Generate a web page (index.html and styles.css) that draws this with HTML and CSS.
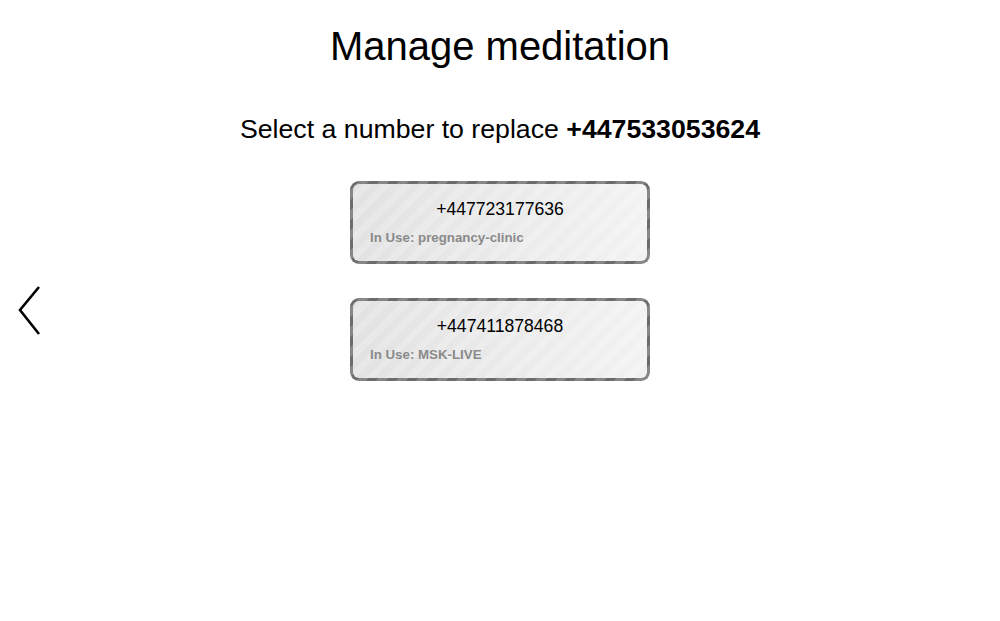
FILE: index.html
```html
<!DOCTYPE html>
<html lang="en">
<head>
<meta charset="utf-8">
<title>Manage meditation</title>
<link rel="stylesheet" href="styles.css">
</head>
<body>
<a class="back" href="#" aria-label="Back">
  <svg width="26" height="52" viewBox="0 0 26 52"><polyline points="22,2 3,25 22,49" fill="none" stroke="#000" stroke-width="2.6"/></svg>
</a>
<main class="page">
  <h1 class="title">Manage meditation</h1>
  <p class="subtitle">Select a number to replace <strong>+447533053624</strong></p>
  <ul class="numbers">
    <li class="card">
      <div class="card-number">+447723177636</div>
      <div class="card-use">In Use: pregnancy-clinic</div>
    </li>
    <li class="card">
      <div class="card-number">+447411878468</div>
      <div class="card-use">In Use: MSK-LIVE</div>
    </li>
  </ul>
</main>
</body>
</html>
```
FILE: styles.css
```css
html, body {
  margin: 0;
  padding: 0;
  background: #fff;
  font-family: "Liberation Sans", Arial, sans-serif;
  color: #000;
}
.page {
  display: flex;
  flex-direction: column;
  align-items: center;
}
.title {
  margin: 23px 0 0;
  font-size: 40px;
  line-height: 46px;
  font-weight: normal;
}
.subtitle {
  margin: 45px 0 0;
  font-size: 26.7px;
  line-height: 30px;
}
.subtitle strong { font-weight: bold; }
.numbers {
  list-style: none;
  margin: 37px 0 0;
  padding: 0;
  display: flex;
  flex-direction: column;
  gap: 34px;
}
.card {
  width: 294px;
  box-sizing: content-box;
  padding: 15px 0 15px;
  border: 3px solid transparent;
  border-radius: 9px;
  background:
    repeating-linear-gradient(135deg, rgba(255,255,255,0) 0 7px, rgba(255,255,255,0.2) 7px 14px) padding-box,
    linear-gradient(90deg, #e2e2e2, #f2f2f2) padding-box,
    repeating-linear-gradient(135deg, #6c6c6c 0 7px, #878787 7px 14px) border-box;
}
.card-number {
  text-align: center;
  font-size: 17.6px;
  line-height: 20px;
}
.card-use {
  margin-top: 11px;
  padding-left: 17px;
  font-size: 13.3px;
  line-height: 16px;
  font-weight: bold;
  color: #8a8a8a;
}
.back {
  position: fixed;
  left: 17px;
  top: 50%;
  transform: translateY(-50%);
  display: block;
  line-height: 0;
}
```
